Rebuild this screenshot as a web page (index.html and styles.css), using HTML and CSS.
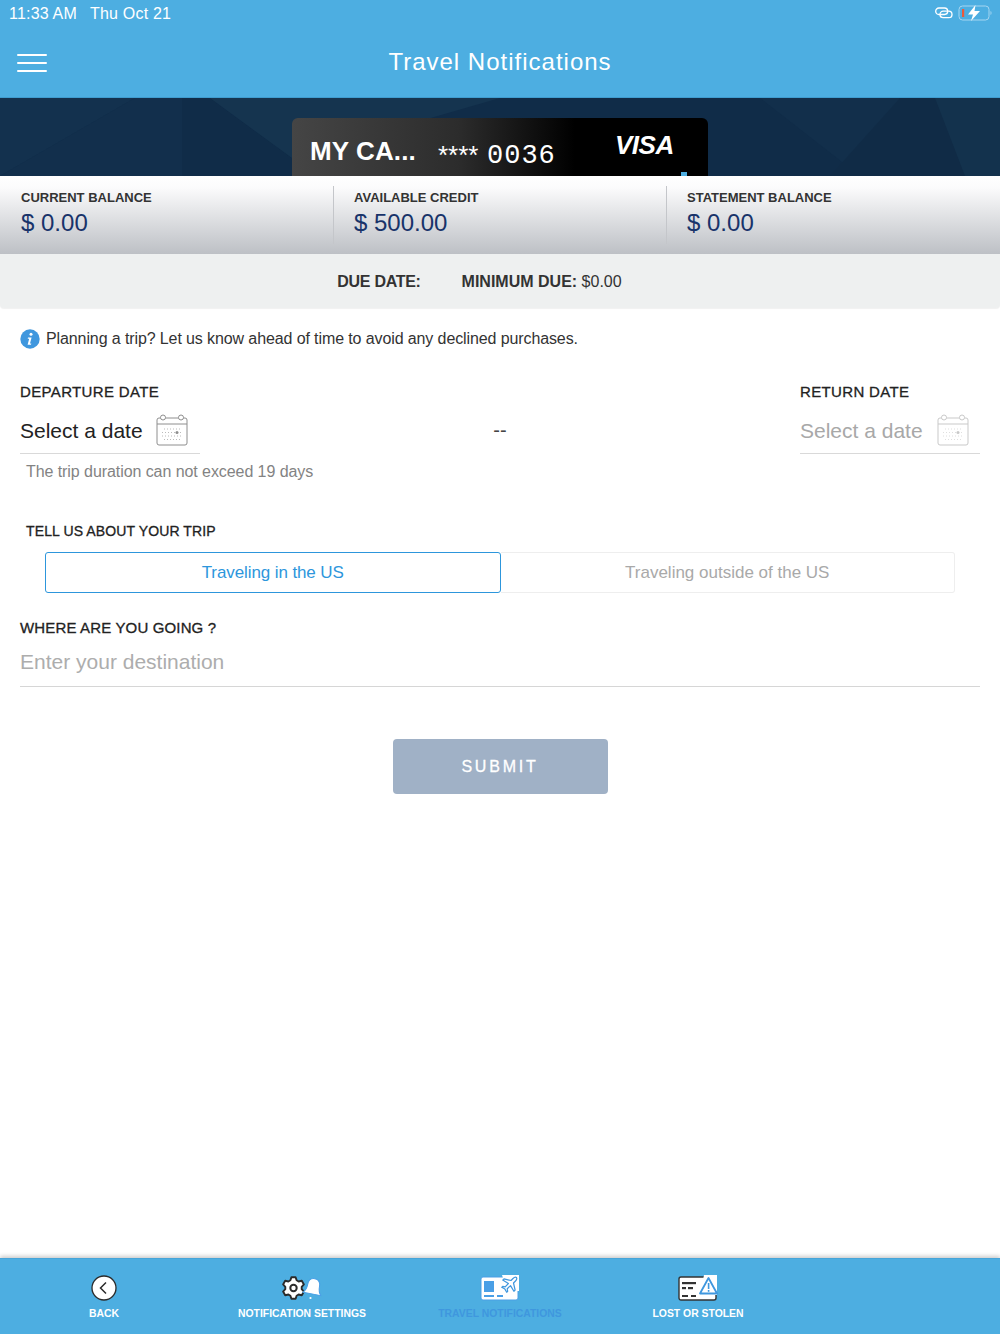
FILE: index.html
```html
<!DOCTYPE html>
<html lang="en">
<head>
<meta charset="utf-8">
<title>Travel Notifications</title>
<link rel="stylesheet" href="styles.css">
</head>
<body>
<div class="page">
  <header class="topbar">
    <div class="status">
      <div class="status-time"><span>11:33 AM</span><span>Thu Oct 21</span></div>
      <div class="status-icons">
        <svg width="18" height="12" viewBox="0 0 18 12" fill="none" stroke="#fff" stroke-width="1.300"><rect x=".7" y="1" width="12" height="6.500" rx="3.200"/><rect x="5" y="4.200" width="12" height="6.500" rx="3.200"/></svg>
        <svg width="34" height="18" viewBox="0 0 34 18"><rect x="1" y="2" width="30" height="14" rx="3.500" fill="none" stroke="#a6d6f1" stroke-width="1"/><rect x="4" y="5" width="2.200" height="8" fill="#ec5a3c"/><path d="M32.500 7v4a2 2 0 0 0 1-2 2 2 0 0 0-1-2z" fill="#a6d6f1"/><path d="M17.500 1 10 10.500h5l-2 6.500 9-10h-5.500z" fill="#fff"/></svg>
      </div>
    </div>
    <div class="navrow">
      <button class="menu" aria-label="Menu"><span></span><span></span><span></span></button>
      <h1>Travel Notifications</h1>
    </div>
  </header>

  <section class="hero">
    <svg class="hero-art" width="1000" height="78" viewBox="0 0 1000 78" preserveAspectRatio="none">
      <polygon points="0,78 135,0 0,0" fill="#13314e"/>
      <polygon points="135,0 182,0 182,78 0,78" fill="#122f4c"/>
      <polygon points="182,78 292,78 292,60 210,0 182,0" fill="#102c48"/>
      <polygon points="210,0 500,0 292,60" fill="#15344f"/>
      <polygon points="860,78 900,0 760,0" fill="#122f4b"/>
      <polygon points="900,0 935,0 965,78 830,78" fill="#102b46"/>
      <polygon points="935,0 1000,0 1000,78 965,78" fill="#13324d"/>
    </svg>
    <div class="card">
      <span class="card-name">MY CA...</span>
      <span class="card-stars">****</span>
      <span class="card-num">0036</span>
      <span class="card-visa">VISA</span>
      <span class="card-mark"></span>
    </div>
  </section>

  <section class="balances">
    <div class="balance"><div class="balance-label">CURRENT BALANCE</div><div class="balance-value">$ 0.00</div></div>
    <div class="balance"><div class="balance-label">AVAILABLE CREDIT</div><div class="balance-value">$ 500.00</div></div>
    <div class="balance"><div class="balance-label">STATEMENT BALANCE</div><div class="balance-value">$ 0.00</div></div>
  </section>

  <section class="due">
    <b class="due-date">DUE DATE:</b>
    <span><b>MINIMUM DUE:</b> $0.00</span>
  </section>

  <main class="content">
    <p class="info">
      <svg width="20" height="20" viewBox="0 0 20 20"><circle cx="10" cy="10" r="9.700" fill="#3f97de"/><circle cx="11" cy="5.300" r="1.500" fill="#fff"/><path d="M8 8.500h3.600l-1.600 6h1.300l-.3 1.200H7.600l1.600-6H7.700z" fill="#fff"/></svg>
      Planning a trip? Let us know ahead of time to avoid any declined purchases.
    </p>

    <div class="dates">
      <div class="date-field">
        <div class="label label-date">DEPARTURE DATE</div>
        <div class="date-input">
          <span>Select a date</span>
          <svg width="32" height="32" viewBox="0 0 32 32" fill="none"><use href="#cal"/></svg>
        </div>
      </div>
      <div class="date-sep">--</div>
      <div class="date-field is-muted">
        <div class="label label-date">RETURN DATE</div>
        <div class="date-input">
          <span>Select a date</span>
          <svg width="32" height="32" viewBox="0 0 32 32" fill="none"><use href="#cal"/></svg>
        </div>
      </div>
    </div>
    <p class="hint">The trip duration can not exceed 19 days</p>

    <div class="label trip-label">TELL US ABOUT YOUR TRIP</div>
    <div class="segments">
      <button class="segment is-active">Traveling in the US</button>
      <button class="segment">Traveling outside of the US</button>
    </div>

    <div class="label where-label">WHERE ARE YOU GOING ?</div>
    <div class="destination">Enter your destination</div>

    <button class="submit">SUBMIT</button>
  </main>

  <nav class="tabs">
    <a class="tab">
      <svg width="28" height="28" viewBox="0 0 28 28"><circle cx="14" cy="14" r="12" fill="#fff" stroke="#2b2b2b" stroke-width="1.300"/><path d="M16 8.500 10.500 14l5.500 5.500" fill="none" stroke="#2b2b2b" stroke-width="1.500"/></svg>
      <span>BACK</span>
    </a>
    <a class="tab">
      <svg width="42" height="28" viewBox="0 0 42 28"><polygon points="10.400,3.200 14.600,3.200 15.600,6.300 17.600,7.500 20.800,6.800 22.900,10.400 20.700,12.800 20.700,15.200 22.900,17.600 20.800,21.200 17.600,20.500 15.600,21.700 14.600,24.800 10.400,24.800 9.400,21.700 7.400,20.500 4.200,21.200 2.100,17.600 4.300,15.200 4.300,12.800 2.100,10.400 4.200,6.800 7.400,7.500 9.400,6.300" fill="#fff" stroke="#2b2b2b" stroke-width="1.900" stroke-linejoin="round"/><circle cx="12.500" cy="14" r="3.200" fill="#fff" stroke="#2b2b2b" stroke-width="2"/><g transform="translate(32 14.500) rotate(11)"><path d="M0-10c-4 0-6 3.200-6 7 0 4.300-1.200 6.600-3 8.500H9c-1.800-1.900-3-4.200-3-8.500 0-3.800-2-7-6-7z" fill="#fff" stroke="#4a9fe6" stroke-width="1"/></g><circle cx="29.500" cy="24" r="1.100" fill="#fff"/></svg>
      <span>NOTIFICATION SETTINGS</span>
    </a>
    <a class="tab is-current">
      <svg width="40" height="26" viewBox="0 0 40 26"><rect x="1" y="2" width="37" height="23" rx="2" fill="#fff" stroke="#4a9fe6"/><rect x="4" y="6" width="10" height="11" fill="#4a9fe6"/><rect x="4" y="20" width="10" height="2" fill="#4a9fe6"/><rect x="17" y="20" width="6" height="2" fill="#4a9fe6"/><path d="M22 0h17v16H27z" fill="#fff"/><path d="M36.500 2.500c-1-.7-2.500 0-3.500 1l-2 2-7-1.600-1.300 1.200 5.700 3.400-3.200 3.300-2.500-.5-1 1 3.200 1.800 1.800 3.200 1-1-.5-2.500 3.300-3.200 3.400 5.700 1.200-1.300-1.600-7 2-2c1-1 1.600-2.400 1-3.500z" fill="#fff" stroke="#3f97de" stroke-width="1.200" stroke-linejoin="round"/></svg>
      <span>TRAVEL NOTIFICATIONS</span>
    </a>
    <a class="tab">
      <svg width="40" height="26" viewBox="0 0 40 26"><rect x="1" y="2" width="37" height="23" rx="2" fill="#fff" stroke="#333" stroke-width="1.400"/><rect x="4" y="7" width="14" height="2.200" fill="#333"/><rect x="4" y="12" width="4" height="2.200" fill="#333"/><rect x="10" y="12" width="5" height="2.200" fill="#333"/><rect x="4" y="20" width="6" height="2" fill="#333"/><rect x="13" y="20" width="5" height="2" fill="#333"/><path d="M26 0h13v20H22z" fill="#fff"/><path d="M30.500 3 22 18.500h17z" fill="#fff" stroke="#3f97de" stroke-width="1.800" stroke-linejoin="round"/><rect x="29.800" y="8" width="1.600" height="6" fill="#3f97de"/><rect x="29.800" y="15" width="1.600" height="1.800" fill="#3f97de"/></svg>
      <span>LOST OR STOLEN</span>
    </a>
  </nav>
</div>

<svg class="defs" width="0" height="0">
  <symbol id="cal" viewBox="0 0 32 32">
    <rect x="1" y="4" width="30" height="27" rx="2" stroke="currentColor"/>
    <path d="M1 10h30" stroke="currentColor"/>
    <circle cx="7" cy="3.500" r="2.500" fill="#fff" stroke="currentColor"/>
    <circle cx="25" cy="3.500" r="2.500" fill="#fff" stroke="currentColor"/>
    <path d="M8 15h16M6 18.500h20M6 22h20M8 25.500h16" stroke="currentColor" stroke-dasharray="1 2" opacity=".6"/>
    <circle cx="21" cy="18.500" r="1.500" fill="currentColor"/>
  </symbol>
</svg>
</body>
</html>
```
FILE: styles.css
```css
* { box-sizing: border-box; }
html, body { margin: 0; padding: 0; }
body { font-family: "Liberation Sans", Arial, sans-serif; background: #fff; color: #222; }
.defs { position: absolute; }
.page { display: flex; flex-direction: column; width: 1000px; height: 1334px; overflow: hidden; }

.topbar { height: 98px; background: #4daee1; border-bottom: 1px solid #3f9ccf; color: #fff; flex: none; }
.status { display: flex; justify-content: space-between; height: 26px; padding: 4px 8px 0 9px; }
.status-time { display: flex; gap: 13px; font-size: 16px; line-height: 19px; letter-spacing: .2px; }
.status-icons { display: flex; align-items: center; gap: 5px; height: 18px; }
.navrow { position: relative; height: 71px; display: flex; align-items: center; justify-content: center; }
.navrow h1 { margin: 0; font-size: 24px; font-weight: 400; letter-spacing: 1px; line-height: 28px; }
.menu { position: absolute; left: 17px; top: 28px; width: 30px; height: 18px; padding: 0; border: 0; background: none; display: flex; flex-direction: column; justify-content: space-between; }
.menu span { display: block; height: 2px; background: #fff; border-radius: 1px; }

.hero { position: relative; flex: none; height: 78px; background: #102c48; overflow: hidden; padding-top: 20px; }
.hero-art { position: absolute; left: 0; top: 0; }
.card { position: relative; display: flex; align-items: center; width: 416px; height: 70px; margin: 0 auto; padding: 0 0 5px 18px; border-radius: 6px; background: linear-gradient(90deg, #454545 0%, #2c2c2c 40%, #000 68%, #000 100%); color: #fff; }
.card-name { width: 128px; font-size: 26px; font-weight: 700; letter-spacing: .1px; line-height: 30px; }
.card-stars { width: 49px; font-size: 26px; line-height: 20px; padding-top: 9px; letter-spacing: 0; }
.card-num { width: 128px; font-family: "Liberation Mono", monospace; font-size: 27px; line-height: 30px; letter-spacing: 1px; padding-top: 11px; }
.card-visa { font-size: 26px; font-weight: 700; font-style: italic; line-height: 30px; letter-spacing: -.5px; margin-top: -12px; }
.card-mark { position: absolute; left: 389px; top: 54px; width: 6px; height: 8px; background: #4daee1; }

.balances { flex: none; display: grid; grid-template-columns: 333px 333px 334px; height: 78px; background: linear-gradient(180deg, #fff 0%, #fbfbfc 15%, #bdc0c5 100%); }
.balance { padding: 14px 0 0 21px; margin-bottom: 11px; }
.balance + .balance { border-left: 1px solid #c4c6ca; margin-top: 10px; padding: 4px 0 0 20px; margin-bottom: 10px; }
.balance-label { font-size: 13px; line-height: 15px; font-weight: 700; color: #333; }
.balance-value { font-size: 24px; line-height: 28px; color: #18336a; margin-top: 4px; }

.due { flex: none; height: 54px; display: flex; justify-content: center; align-items: center; gap: 41px; padding: 2px 41px 0 0; background: #eef0f0; border-radius: 0 0 4px 4px; font-size: 16px; color: #333; box-shadow: 0 1px 1px rgba(0,0,0,.06); }
.due-date { letter-spacing: -.3px; }

.content { flex: 1; padding: 21px 20px 0; }
.info { display: flex; align-items: center; gap: 6px; margin: 0; height: 20px; font-size: 16px; line-height: 20px; color: #333; letter-spacing: -.107px; }
.label { font-size: 15px; line-height: 18px; color: #222; letter-spacing: .15px; -webkit-text-stroke: .3px #222; }
.label-date { letter-spacing: .35px; }
.dates { display: flex; justify-content: space-between; margin-top: 34px; }
.date-field { width: 180px; }
.date-input { display: flex; align-items: center; justify-content: space-between; height: 48px; margin-top: 5px; padding: 2px 12px 0 0; border-bottom: 1px solid #d9d9d9; font-size: 21px; color: #222; }
.date-input svg { color: #8e8e8e; margin-top: -1px; }
.date-field.is-muted .date-input { color: #a8a8a8; padding-right: 11px; }
.date-field.is-muted .date-input svg { color: #c9c9c9; }
.date-sep { align-self: center; font-size: 20px; color: #444; padding-top: 23px; }
.hint { margin: 8px 0 0 6px; font-size: 16px; line-height: 20px; color: #838383; letter-spacing: -.07px; }
.label.trip-label { margin: 40px 0 0 6px; font-size: 14px; letter-spacing: .12px; }
.segments { display: flex; margin: 12px 25px 0 25px; height: 41px; }
.segment { flex: 1 1 0; padding: 1px 0 0; background: #fff; border: 1px solid #eeeeee; border-radius: 0 3px 3px 0; border-left: 0; font: inherit; font-size: 17px; color: #a9a9a9; }
.segment.is-active { border: 1px solid #2d96dc; border-radius: 3px; color: #2d96dc; letter-spacing: -.1px; }
.where-label { margin-top: 26px; }
.destination { height: 50px; padding-top: 12px; font-size: 21px; line-height: 26px; color: #adadad; border-bottom: 1px solid #d6d6d6; }
.submit { display: block; width: 215px; height: 55px; margin: 52px auto 0; border: 0; border-radius: 4px; background: #a0b1c6; color: #fff; font: inherit; font-size: 16px; letter-spacing: 2.800px; -webkit-text-stroke: .3px #fff; }

.tabs { flex: none; display: grid; grid-template-columns: repeat(4, 198px); height: 76px; padding-left: 5px; background: #4daee1; border-top: 1px solid #46a4d8; box-shadow: 0 -2px 4px rgba(0,0,0,.2); position: relative; }
.tab { display: flex; flex-direction: column; align-items: center; justify-content: flex-start; padding-top: 15px; color: #fff; font-size: 10.400px; font-weight: 700; line-height: 14px; }
.tab svg { height: 28px; margin-bottom: 5px; }
.tab.is-current { color: #3f97de; }
```
